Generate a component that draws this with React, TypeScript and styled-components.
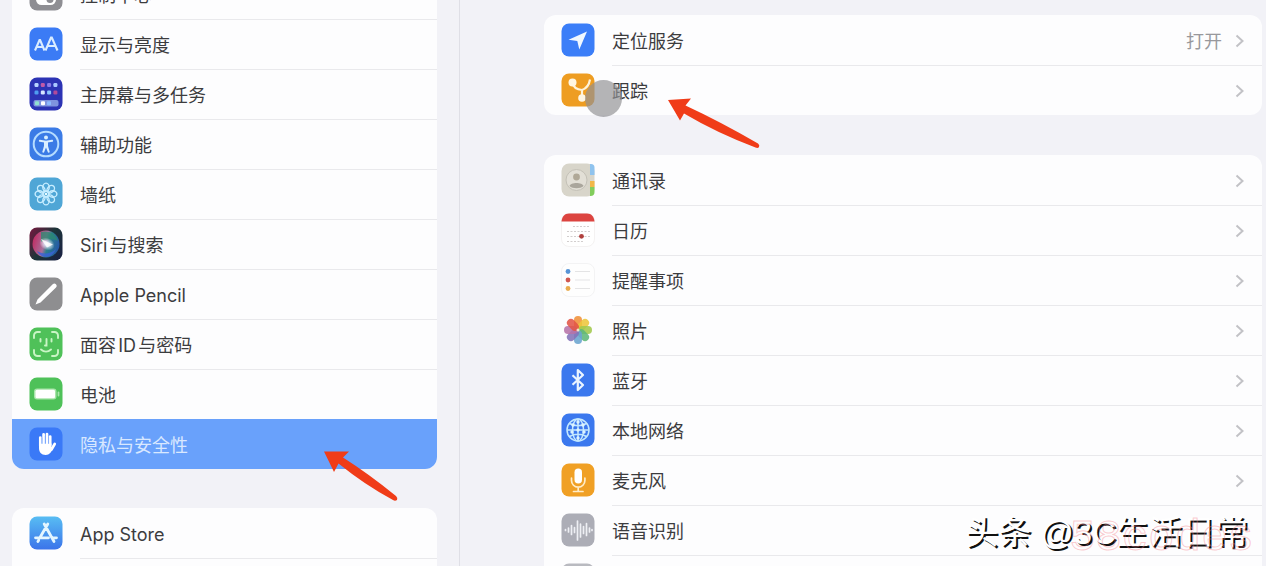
import React from "react";
import styled, { createGlobalStyle, css } from "styled-components";

const Global = createGlobalStyle`
  * { box-sizing: border-box; }
  body { margin: 0; background: #f2f2f7; font-family: Inter, "Noto Sans CJK SC", sans-serif; color: #3c3c3e; }
`;

const Page = styled.div`
  position: relative;
  display: grid;
  grid-template-columns: 460px minmax(0, 1fr);
  height: 100vh;
  overflow: hidden;
`;

const Sidebar = styled.nav`
  border-right: 1px solid #dfdfe6;
  padding: 0 22px 0 12px;
  min-height: 0;
`;

const SidebarScroll = styled.div`
  margin-top: -31px;
  display: flex;
  flex-direction: column;
  gap: 39px;
`;

const Main = styled.main`
  padding: 15px 4px 0 84px;
  min-height: 0;
  display: flex;
  flex-direction: column;
  gap: 40px;
`;

const Card = styled.ul`
  list-style: none;
  margin: 0;
  padding: 0;
  background: #fdfdfe;
  border-radius: 12px;
  flex-shrink: 0;
`;

const RowBody = styled.span`
  flex: 1;
  align-self: stretch;
  display: flex;
  align-items: center;
  border-top: 1px solid #e9e9ec;
  padding-right: 17px;
  font-size: 18px;
  line-height: 24px;
  text-autospace: normal;
`;

const RowLink = styled.a<{ $selected?: boolean }>`
  display: flex;
  align-items: center;
  gap: 17px;
  height: 50px;
  padding-left: 17px;
  color: inherit;
  text-decoration: none;
  svg { flex: none; }
  ${(p) => p.$selected && css`
    background: #69a1fb;
    color: #d9e8ff;
    ${RowBody} { border-top-color: transparent; }
  `}
`;

const Item = styled.li`
  position: relative;
  height: 50px;
  &:last-child ${RowLink} { border-radius: 0 0 12px 12px; }
  &:first-child ${RowBody} { border-top-color: transparent; }
`;

const Label = styled.span`
  flex: 1;
  padding-top: 2px;
`;

const Value = styled.span`
  color: #98989c;
  margin-right: 13px;
  padding-top: 2px;
`;

const Overlay = styled.svg<{ $x: number; $y: number }>`
  position: absolute;
  left: ${(p) => p.$x}px;
  top: ${(p) => p.$y}px;
  pointer-events: none;
  z-index: 2;
`;

const Touch = styled.span`
  position: absolute;
  left: 41px;
  top: 15px;
  width: 37px;
  height: 37px;
  border-radius: 50%;
  background: rgba(145, 145, 147, 0.68);
`;

const Watermark = styled.div`
  position: absolute;
  right: 18px;
  bottom: 13px;
  font-size: 33px;
  line-height: 40px;
  font-family: "Liberation Sans", "Noto Sans CJK SC", sans-serif;
  color: #fff;
  text-shadow: 2px 2px 0 #111;
  white-space: nowrap;
`;

const Stamp = styled.div`
  position: absolute;
  right: 12px;
  bottom: 4px;
  font-size: 44px;
  line-height: 48px;
  font-family: "Liberation Mono", monospace;
  color: transparent;
  -webkit-text-stroke: 1px rgba(245, 130, 140, 0.42);
`;

const Chevron = () => (
  <svg width="10" height="14" viewBox="0 0 10 14" fill="none" stroke="#c2c2c6" strokeWidth="2">
    <path d="M1.5 1.5 7.5 7l-6 5.5" />
  </svg>
);

const Tile = ({ fill, children }: { fill: string; children?: React.ReactNode }) => (
  <svg width="34" height="34" viewBox="0 0 34 34">
    <rect x=".5" y=".5" width="33" height="33" rx="7.5" fill={fill} />
    {children}
  </svg>
);

const range = (n: number) => Array.from({ length: n }, (_, i) => i);

const icons = {
  control: (
    <Tile fill="#8e8e93">
      <rect x="7" y="17" width="20" height="11" rx="5.5" fill="#fff" />
      <circle cx="21" cy="22.500" r="3.500" fill="#8e8e93" />
    </Tile>
  ),
  display: (
    <Tile fill="#3b7bf5">
      <g fill="none" stroke="#d9ecff" strokeWidth="2.100">
        <path d="M6 23.500 10.500 13h.6L15.500 23.500M7.500 20H14" />
        <path d="M16.500 23.500 22 10.500h.8L28.500 23.500M18.500 19H26.500" />
      </g>
    </Tile>
  ),
  home: (
    <Tile fill="#2c33b4">
      {["#b9d4ff", "#c05aa8", "#8d7be8", "#a9c8ff", "#4f9cf0", "#d8e6ff", "#8cc4ff", "#b04a9a"].map((c, i) => (
        <rect key={i} x={5.5 + (i % 4) * 6.3} y={6 + Math.floor(i / 4) * 7.5} width="4" height="4" rx="1.200" fill={c} />
      ))}
      <rect x="4.500" y="23" width="25" height="6.500" rx="2" fill="#7f93de" />
      <rect x="6" y="24.200" width="4" height="4" rx="1" fill="#90e0d0" />
      <rect x="12" y="24.200" width="4" height="4" rx="1" fill="#fff" />
      <rect x="18" y="24.200" width="4" height="4" rx="1" fill="#8cb9ff" />
    </Tile>
  ),
  access: (
    <Tile fill="#3b7be6">
      <circle cx="17" cy="17" r="12.300" fill="none" stroke="#b5dcff" strokeWidth="2" />
      <circle cx="17" cy="10.500" r="2" fill="#d9efff" />
      <path d="M10.800 13.800 17 14.800l6.200-1" fill="none" stroke="#d9efff" strokeWidth="1.900" strokeLinecap="round" />
      <path d="M15 14h4v5l1.800 6.300-1.700.5L17 20.500l-2.100 5.300-1.700-.5L15 19z" fill="#d9efff" />
    </Tile>
  ),
  wallpaper: (
    <Tile fill="#4fa6d6">
      <g fill="none" stroke="#c6edff" strokeWidth="1.400">
        {range(8).map((i) => (
          <ellipse key={i} cx="17" cy="10.300" rx="3.200" ry="4.200" transform={`rotate(${i * 45} 17 17)`} />
        ))}
        <circle cx="17" cy="17" r="3" />
      </g>
      <circle cx="17" cy="17" r="1.300" fill="#e8faff" />
    </Tile>
  ),
  siri: (
    <svg width="34" height="34" viewBox="0 0 34 34">
      <defs>
        <linearGradient id="siriA" x1="0" y1=".3" x2="1" y2=".6">
          <stop offset="0" stopColor="#c22b62" />
          <stop offset=".45" stopColor="#a8709c" />
          <stop offset=".6" stopColor="#2c7f8c" />
          <stop offset="1" stopColor="#2456a8" />
        </linearGradient>
        <radialGradient id="siriB">
          <stop offset="0" stopColor="#fff" />
          <stop offset=".35" stopColor="#e8eaff" stopOpacity=".8" />
          <stop offset="1" stopColor="#fff" stopOpacity="0" />
        </radialGradient>
        <linearGradient id="siriC" x2="1" y2=".7">
          <stop offset="0" stopColor="#7a1740" />
          <stop offset=".55" stopColor="#1c3438" />
          <stop offset="1" stopColor="#1a2442" />
        </linearGradient>
      </defs>
      <rect x=".5" y=".5" width="33" height="33" rx="7.500" fill="url(#siriC)" />
      <circle cx="17" cy="17" r="13.500" fill="url(#siriA)" />
      <path d="M12 5c8-2 15 2 17 9-5-3-12-2-17 1z" fill="#2b8a70" opacity=".75" />
      <path d="M8 24c6 4 14 3 19-2-2 5-6 8-10 8s-7-2-9-6z" fill="#3a62d8" opacity=".8" />
      <ellipse cx="18" cy="17" rx="8" ry="6" fill="url(#siriB)" transform="rotate(25 18 17)" />
      <path d="M12 12l12 5.500-6 3z" fill="#fff" opacity=".8" />
    </svg>
  ),
  pencil: (
    <Tile fill="#8e8e90">
      <path d="M6.500 27.500l2-5L23.700 7.300a2.300 2.300 0 0 1 3.300 3.300L11.500 25.500z" fill="#fff" />
    </Tile>
  ),
  face: (
    <Tile fill="#4fc159">
      <g fill="none" stroke="#c9f5c5" strokeWidth="1.900" strokeLinecap="round">
        <path d="M5 11V8.500A3.500 3.500 0 0 1 8.500 5H11M23 5h2.500A3.500 3.500 0 0 1 29 8.500V11M29 23v2.500a3.500 3.500 0 0 1-3.500 3.500H23M11 29H8.500A3.500 3.500 0 0 1 5 25.500V23" />
        <path d="M11.500 12v2.500M22.500 12v2.500M17.500 12v6.500h-1.500M12 22.500c3 2.800 7 2.800 10 0" />
      </g>
    </Tile>
  ),
  battery: (
    <Tile fill="#4ec159">
      <rect x="5" y="11.500" width="22.500" height="11" rx="3" fill="#a8e5aa" />
      <rect x="6.500" y="12.800" width="19.500" height="8.400" rx="1.500" fill="#fff" />
      <path d="M29.500 15.500v3" stroke="#a8e5aa" strokeWidth="1.800" strokeLinecap="round" />
    </Tile>
  ),
  hand: (
    <Tile fill="#3a79f7">
      <g stroke="#fff" strokeWidth="2.700" strokeLinecap="round">
        <path d="M11.300 19V10.500M14.600 18V7.300M18 18V7M21.200 18V9.500M22.500 22.500l3.200-5.500" />
      </g>
      <path d="M10 16.500h12.500v3.500l1.500 1c-1.500 4-3.500 7-7.300 7-4.500 0-6.700-3-6.700-7z" fill="#fff" />
      <path d="M13 10.500V17M16.300 9V17M19.600 10V17" stroke="#78a8ff" strokeWidth=".6" />
    </Tile>
  ),
  store: (
    <svg width="34" height="34" viewBox="0 0 34 34">
      <defs>
        <linearGradient id="storeG" x2="0" y2="1">
          <stop offset="0" stopColor="#58bdf3" />
          <stop offset="1" stopColor="#3b74ea" />
        </linearGradient>
      </defs>
      <rect x=".5" y=".5" width="33" height="33" rx="7.500" fill="url(#storeG)" />
      <g stroke="#e4f6ff" strokeWidth="2.800" strokeLinecap="round">
        <path d="M15.200 8l9.800 17.500M18.800 8 11 21.500M6.500 21.800h13M24 21.800h3.500M9.700 24.200 8.900 25.500" />
      </g>
    </svg>
  ),
  location: (
    <Tile fill="#3b7ef8">
      <path d="M26 8.500 18.300 26.500 16.300 18 7.500 16.800z" fill="#f0f8ff" />
    </Tile>
  ),
  tracking: (
    <Tile fill="#ee9d22">
      <g fill="none" stroke="#fff3d8" strokeWidth="2.200">
        <path d="M11.500 10c1 5 4 6.500 9.500 7M29 6.500c-1 6-3.500 9-8 10.500V25" />
      </g>
      <circle cx="11.500" cy="9.500" r="4" fill="#fff6e2" />
      <circle cx="21" cy="25" r="3.800" fill="#fff6e2" />
    </Tile>
  ),
  contacts: (
    <Tile fill="#d8d5ca">
      <path d="M29 1h1a3.500 3.500 0 0 1 3.500 3.500V12H29z" fill="#8fc3ee" />
      <path d="M29 18h4.500v6H29z" fill="#f1b748" />
      <path d="M29 24h4.500v5a4 4 0 0 1-4 4H29z" fill="#82cd5c" />
      <circle cx="15.500" cy="17" r="10.500" fill="#e2dfd6" stroke="#c4c1b7" strokeWidth="1" />
      <circle cx="15.500" cy="14" r="3.400" fill="#b0a897" />
      <path d="M8.500 23c1-4 13-4 14 0-3 3-11 3-14 0z" fill="#aaa69c" />
    </Tile>
  ),
  calendar: (
    <svg width="34" height="34" viewBox="0 0 34 34">
      <rect x=".5" y=".5" width="33" height="33" rx="7.500" fill="#fff" stroke="#f4f2f2" />
      <path d="M.5 8.500C1 3.500 3.500.5 8 .5h18c4.500 0 7 3 7.500 8z" fill="#dc4440" />
      <g stroke="#d2cece" strokeWidth="1.200" strokeDasharray="2 1.500">
        <path d="M12 13.500h17M6 18.500h23M6 23.500h23M6 28.500h17" />
      </g>
      <circle cx="20.500" cy="23.300" r="2.400" fill="#b0403e" />
    </svg>
  ),
  reminders: (
    <svg width="34" height="34" viewBox="0 0 34 34">
      <rect x=".5" y=".5" width="33" height="33" rx="7.500" fill="#fefefe" stroke="#f3f3f4" />
      <path d="M14 8.500h15M14 17h15M14 25.500h15" stroke="#e4e4e5" strokeWidth="1.200" />
      <circle cx="7" cy="8.500" r="2.400" fill="#5794d6" />
      <circle cx="7" cy="17" r="2.400" fill="#d0574f" />
      <circle cx="7" cy="25.500" r="2.400" fill="#e9ac4e" />
    </svg>
  ),
  photos: (
    <svg width="34" height="34" viewBox="0 0 34 34">
      {["#f0913a", "#ecc63b", "#a2c84c", "#5fb77a", "#6aa4cf", "#8473b8", "#b673a8", "#e25547"].map((c, i) => (
        <rect key={c} x="13" y="3" width="8" height="13.500" rx="4" fill={c} opacity=".88" transform={`rotate(${i * 45} 17 17)`} />
      ))}
      <circle cx="17" cy="17" r="1.500" fill="#f4e3cc" />
    </svg>
  ),
  bluetooth: (
    <Tile fill="#3b78ee">
      <path d="M11.500 12.200 22 22l-5.200 5V7l5.200 5-10.500 9.800" fill="none" stroke="#eaf5ff" strokeWidth="2.200" strokeLinejoin="round" />
    </Tile>
  ),
  network: (
    <Tile fill="#3b78ee">
      <g fill="none" stroke="#c3e8ff" strokeWidth="1.500">
        <circle cx="17" cy="17" r="11" />
        <ellipse cx="17" cy="17" rx="5.500" ry="11" />
        <path d="M6 17h22M17 6v22M8.500 10.500c5 3 12 3 17 0M8.500 23.500c5-3 12-3 17 0" />
      </g>
      {[[12, 12], [22, 12], [17, 17], [11, 19], [23, 19], [17, 25], [17, 9]].map(([x, y]) => (
        <circle key={`${x}-${y}`} cx={x} cy={y} r="1.700" fill="#dcf3ff" />
      ))}
    </Tile>
  ),
  mic: (
    <Tile fill="#f0a025">
      <rect x="13.500" y="5.500" width="7.500" height="15" rx="3.750" fill="#fff" />
      <path d="M10.500 15v2.500a6.700 6.700 0 0 0 13.400 0V15M17.200 24v4.500M12.500 28.500h9.500" fill="none" stroke="#ffecc8" strokeWidth="1.700" strokeLinecap="round" />
    </Tile>
  ),
  speech: (
    <Tile fill="#acadb6">
      <g stroke="#eeeff4" strokeWidth="1.700" strokeLinecap="round">
        <path d="M4.500 16.500v1M7.500 15v4M10.500 12.500v9M13.500 14.500v5M16.500 8v19M19.500 11v13M22.500 13.500v7M25.500 10.500v12M28.500 15v4M31 16.500v1" />
      </g>
    </Tile>
  ),
  blank: <Tile fill="#b9bac0" />,
};

type Entry = { icon: keyof typeof icons; label: string; value?: string; selected?: boolean; mark?: React.ReactNode };

const settings: Entry[] = [
  { icon: "control", label: "控制中心" },
  { icon: "display", label: "显示与亮度" },
  { icon: "home", label: "主屏幕与多任务" },
  { icon: "access", label: "辅助功能" },
  { icon: "wallpaper", label: "墙纸" },
  { icon: "siri", label: "Siri与搜索" },
  { icon: "pencil", label: "Apple Pencil" },
  { icon: "face", label: "面容ID与密码" },
  { icon: "battery", label: "电池" },
  {
    icon: "hand",
    label: "隐私与安全性",
    selected: true,
    mark: (
      <Overlay $x={311} $y={31} width="76" height="52" viewBox="0 0 76 52">
        <path d="M1 1.500 26 1.500 20 7.500Q46 24 73 46Q75 48 74 50Q72 51.500 70 50Q42 35 15.500 13.500L11 22Z" fill="#f03c18" />
      </Overlay>
    ),
  },
];

const stores: Entry[] = [
  { icon: "store", label: "App Store" },
  { icon: "blank", label: "钱包" },
];

const privacyTop: Entry[] = [
  { icon: "location", label: "定位服务", value: "打开" },
  {
    icon: "tracking",
    label: "跟踪",
    mark: (
      <>
        <Touch />
        <Overlay $x={123} $y={33} width="94" height="52" viewBox="0 0 94 52">
          <path d="M1 2 24 .5 18.500 7.500Q54 24 91 45.500Q93 47 92 49Q91 50.500 88.500 49.500Q50 35 17 15.500L13 22.500Z" fill="#f03c18" />
        </Overlay>
      </>
    ),
  },
];

const privacyApps: Entry[] = [
  { icon: "contacts", label: "通讯录" },
  { icon: "calendar", label: "日历" },
  { icon: "reminders", label: "提醒事项" },
  { icon: "photos", label: "照片" },
  { icon: "bluetooth", label: "蓝牙" },
  { icon: "network", label: "本地网络" },
  { icon: "mic", label: "麦克风" },
  { icon: "speech", label: "语音识别" },
  { icon: "blank", label: "相机" },
];

const List = ({ entries, chevrons }: { entries: Entry[]; chevrons?: boolean }) => (
  <Card>
    {entries.map((e) => (
      <Item key={e.label}>
        <RowLink href="#" $selected={e.selected} aria-current={e.selected ? "page" : undefined}>
          {icons[e.icon]}
          <RowBody>
            <Label>{e.label}</Label>
            {e.value && <Value>{e.value}</Value>}
            {chevrons && <Chevron />}
          </RowBody>
        </RowLink>
        {e.mark}
      </Item>
    ))}
  </Card>
);

export default function App() {
  return (
    <Page>
      <Global />
      <Sidebar>
        <SidebarScroll>
          <List entries={settings} />
          <List entries={stores} />
        </SidebarScroll>
      </Sidebar>
      <Main>
        <List entries={privacyTop} chevrons />
        <List entries={privacyApps} chevrons />
      </Main>
      <Watermark>头条 @3C生活日常</Watermark>
      <Stamp>58codes</Stamp>
    </Page>
  );
}
